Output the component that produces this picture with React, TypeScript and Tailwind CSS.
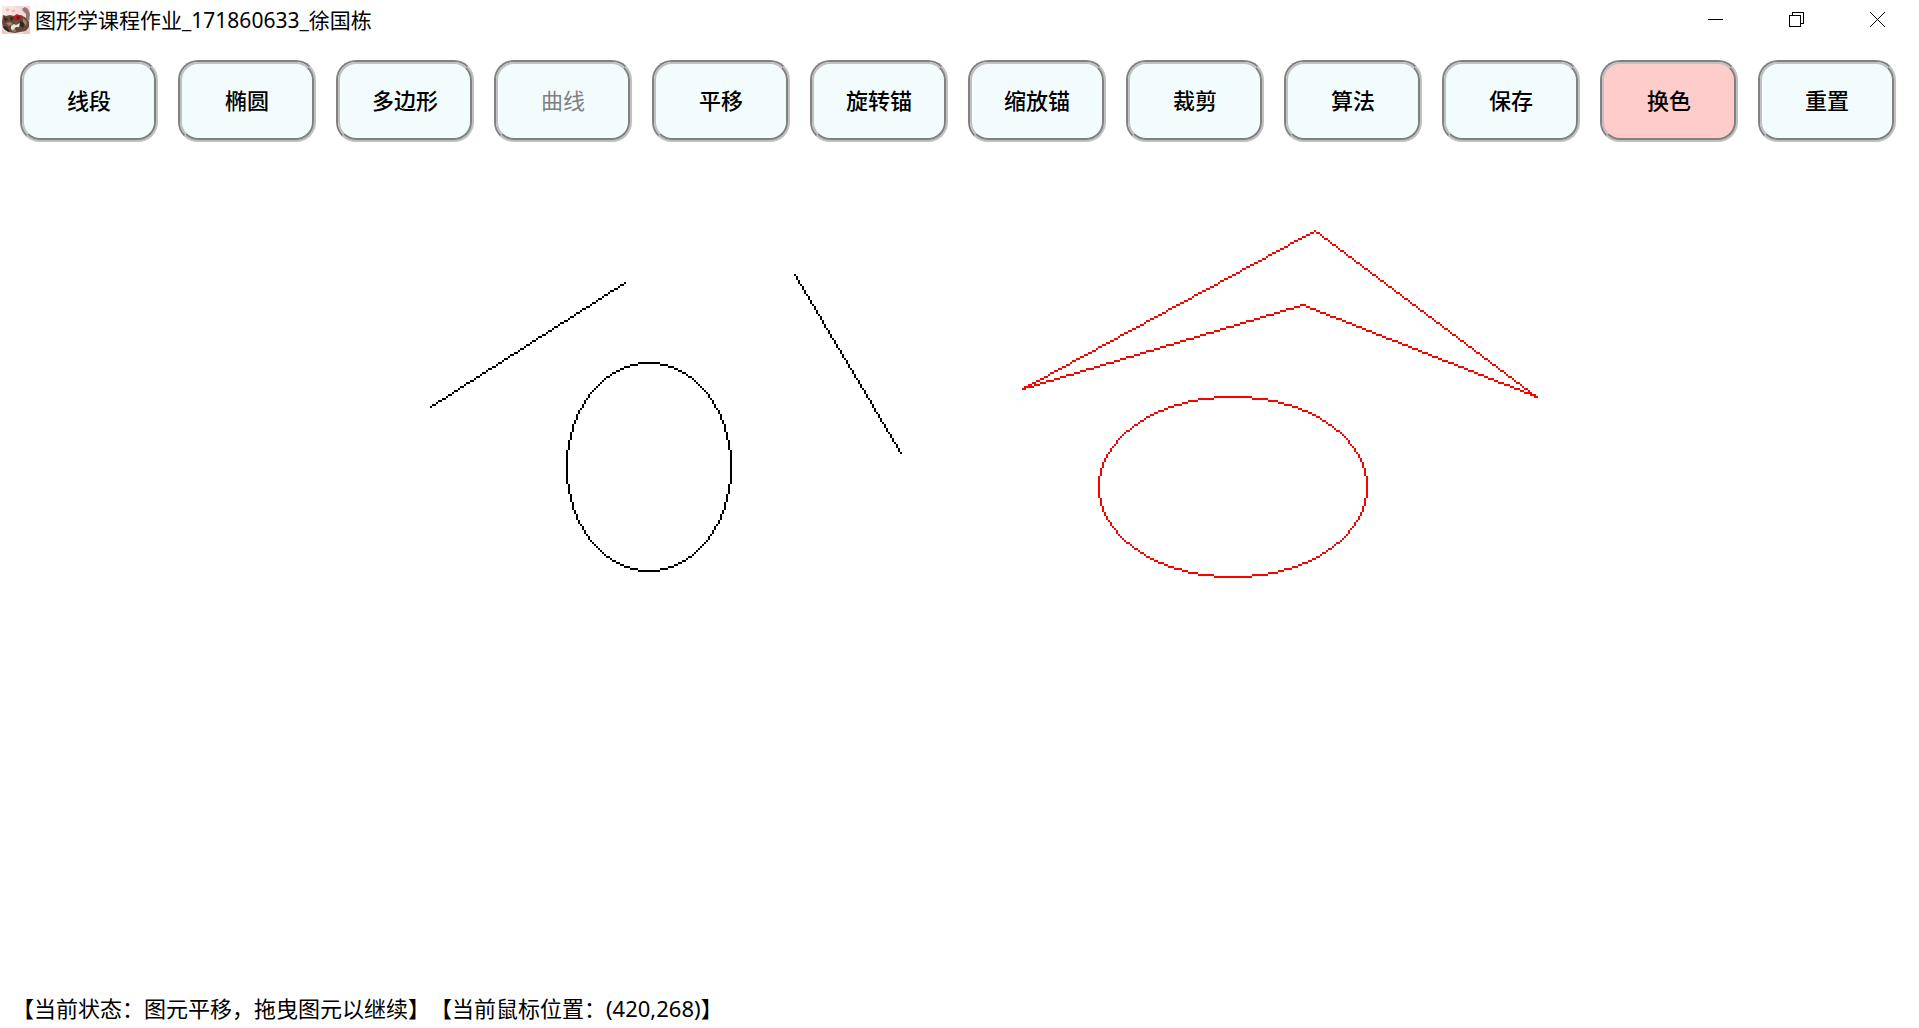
import React from "react";

type Cell = [number, number];

/* Bresenham line between two cells, both ends included. */
function line(x0: number, y0: number, x1: number, y1: number): Cell[] {
  const cells: Cell[] = [];
  const dx = Math.abs(x1 - x0);
  const dy = -Math.abs(y1 - y0);
  const sx = x0 < x1 ? 1 : -1;
  const sy = y0 < y1 ? 1 : -1;
  let err = dx + dy;
  for (;;) {
    cells.push([x0, y0]);
    if (x0 === x1 && y0 === y1) return cells;
    const e2 = 2 * err;
    if (e2 >= dy) {
      err += dy;
      x0 += sx;
    }
    if (e2 <= dx) {
      err += dx;
      y0 += sy;
    }
  }
}

/* Midpoint ellipse, mirrored from one quadrant. */
function ellipse(cx: number, cy: number, rx: number, ry: number): Cell[] {
  const cells: Cell[] = [];
  const plot = (x: number, y: number) => {
    cells.push([cx + x, cy + y], [cx - x, cy + y], [cx + x, cy - y], [cx - x, cy - y]);
  };
  let x = 0;
  let y = ry;
  let p = ry * ry - rx * rx * ry + (rx * rx) / 4;
  while (ry * ry * x <= rx * rx * y) {
    plot(x, y);
    x++;
    if (p < 0) {
      p += 2 * ry * ry * x + ry * ry;
    } else {
      y--;
      p += 2 * ry * ry * x - 2 * rx * rx * y + ry * ry;
    }
  }
  p = ry * ry * (x + 0.5) * (x + 0.5) + rx * rx * (y - 1) * (y - 1) - rx * rx * ry * ry;
  while (y >= 0) {
    plot(x, y);
    y--;
    if (p > 0) {
      p += rx * rx - 2 * rx * rx * y;
    } else {
      x++;
      p += 2 * ry * ry * x - 2 * rx * rx * y + rx * rx;
    }
  }
  return cells;
}

const toPath = (cells: Cell[]) => cells.map(([x, y]) => `M${x * 2} ${y * 2}h2v2h-2z`).join("");

const shapes = [
  { name: "line-1", color: "#000000", cells: line(215, 128, 312, 66) },
  { name: "line-2", color: "#000000", cells: line(397, 62, 450, 151) },
  { name: "ellipse-1", color: "#000000", cells: ellipse(324, 158, 41, 52) },
  {
    name: "polygon",
    color: "#ff0000",
    cells: [
      ...line(511, 119, 657, 40),
      ...line(657, 40, 768, 123),
      ...line(768, 123, 651, 77),
      ...line(651, 77, 511, 119),
    ],
  },
  { name: "ellipse-2", color: "#ff0000", cells: ellipse(616, 168, 67, 45) },
];

const tools = ["线段", "椭圆", "多边形", "曲线", "平移", "旋转锚", "缩放锚", "裁剪", "算法", "保存", "换色", "重置"];

/* The grooved frame is two nested bevels: the outer one sunken, the inner one raised. */
function ToolButton({ label }: { label: string }) {
  const fill = label === "换色" ? "bg-[#ffcccc]" : "bg-[#f2fcfd]";
  return (
    <button
      type="button"
      disabled={label === "曲线"}
      className={`${fill} h-[82px] flex-1 rounded-[20px] border-2 border-t-[#808080] border-r-[#c0c0c0] border-b-[#c0c0c0] border-l-[#808080] font-['Noto_Sans_CJK_SC',sans-serif] text-[22px] font-medium text-black disabled:font-normal disabled:text-[#808080]`}
    >
      <span className="flex size-full items-center justify-center rounded-[18px] border-2 border-t-[#c0c0c0] border-r-[#808080] border-b-[#808080] border-l-[#c0c0c0] pb-1">
        {label}
      </span>
    </button>
  );
}

function AppIcon() {
  return (
    <svg viewBox="0 0 28 28" className="size-7" aria-hidden="true">
      <rect width="28" height="28" fill="#f5d9d8" />
      <path d="M0 0h12l4 4-5 5H0z" fill="#f9e6e3" />
      <path d="M3 3l3-1 2 2-3 2zM9 5l3-2 2 2-3 2z" fill="#ebbcbc" />
      <path d="M20 3l3-2 3 2 2 5-1 7-3-2 0-5-3-3z" fill="#94786c" />
      <path d="M1 9l3 1 4-1 4 1 7-1 5 3 3 4 0 5-3 4-6 1-5 1-7-1-5-4-1-6z" fill="#64493b" />
      <path d="M2 11l4 2-3 3zM8 11l4 1-3 3zM18 15l5 2-2 5-4-3zM1 20l4 1 3 5-5-2z" fill="#33241d" />
      <path d="M21 12l4 4-1 4-3-4zM4 17l4-1 3 2-4 2zM9 22l4 1 1 3-4-1z" fill="#a58569" />
      <path d="M12 10l3-2 4 2v3l-3 2-4-1z" fill="#b0202a" />
      <path d="M14 11l3-1 1 2-2 2z" fill="#76121a" />
      <path d="M9 20l3-2 2 1 4-2-1 4-3 0-3 3-2-1z" fill="#e6e6dc" />
      <path d="M13 15l5 0-1 2-4 1z" fill="#4f5f45" />
      <path d="M0 23l4 3 2 2H0zM23 25l5-2v5h-7z" fill="#e8c9bd" />
    </svg>
  );
}

export default function App() {
  return (
    <div className="flex min-h-screen flex-col bg-white font-['Noto_Sans_CJK_SC',sans-serif] text-black">
      <header className="flex h-10 items-center justify-between pr-px pl-0.5">
        <div className="flex items-center gap-[5px]">
          <AppIcon />
          <h1 className="pb-0.5 text-[21px] leading-7">
            图形学课程作业<span className="font-['Noto_Sans','Noto_Sans_CJK_SC',sans-serif]">_171860633_</span>徐国栋
          </h1>
        </div>
        <div className="flex h-10 items-center pb-px">
          <button type="button" aria-label="最小化" className="flex h-[39px] w-[81px] items-center justify-center">
            <svg viewBox="0 0 15 15" className="size-[15px]" fill="none" stroke="#000" shapeRendering="crispEdges">
              <path d="M0 7.5h15" />
            </svg>
          </button>
          <button type="button" aria-label="向下还原" className="flex h-[39px] w-[81px] items-center justify-center">
            <svg viewBox="0 0 15 15" className="size-[15px]" fill="none" stroke="#000" shapeRendering="crispEdges">
              <path d="M.5 3.5h11v11H.5zM3.5 3V.5h11v11H12" />
            </svg>
          </button>
          <button type="button" aria-label="关闭" className="flex h-[39px] w-[81px] items-center justify-center">
            <svg viewBox="0 0 15 15" className="size-[15px]" fill="none" stroke="#000">
              <path d="M0 0l15 15M15 0L0 15" />
            </svg>
          </button>
        </div>
      </header>

      <nav className="mt-5 mr-[23px] ml-5 flex gap-5">
        {tools.map((label) => (
          <ToolButton key={label} label={label} />
        ))}
      </nav>

      <main className="mt-2 flex-1">
        <svg width="1600" height="500" className="block" shapeRendering="crispEdges" role="img" aria-label="画布">
          {shapes.map((s) => (
            <path key={s.name} d={toPath(s.cells)} fill={s.color} />
          ))}
        </svg>
      </main>

      <footer className="px-3 pb-1 text-[22px] leading-8 [text-spacing-trim:space-all]">
        【当前状态：图元平移，拖曳图元以继续】【当前鼠标位置：
        <span className="font-['Noto_Sans','Noto_Sans_CJK_SC',sans-serif]">(420,268)</span>】
      </footer>
    </div>
  );
}
